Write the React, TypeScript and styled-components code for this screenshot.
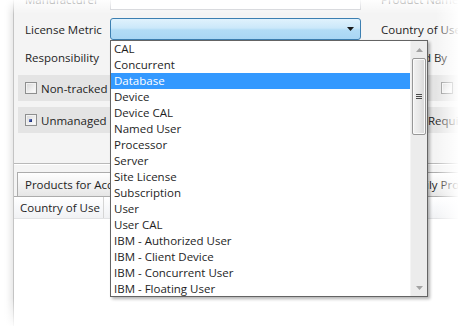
import React from "react";
import styled, { createGlobalStyle } from "styled-components";

const Global = createGlobalStyle`
  html, body { margin: 0; padding: 0; background: #fff; }
  body { font-family: "Open Sans", "Noto Sans", sans-serif; font-size: 11.5px; color: #1e1e1e; }
  * { box-sizing: border-box; }
`;

const Stage = styled.div`
  position: relative;
  width: 458px;
  height: 326px;
  overflow: hidden;
  background: #fff;
  padding-left: 13px;
`;

const Window = styled.div`
  height: 100%;
  background: #f4f4f4;
  border-left: 1px solid #c4c4c4;
  box-shadow: -3px 0 6px rgba(0, 0, 0, 0.1);
  display: flex;
  flex-direction: column;
`;

const Form = styled.div`
  margin-top: -12px;
  padding-left: 4px;
  display: flex;
  flex-direction: column;
`;

const Row = styled.div<{ $top: number; $h: number }>`
  display: grid;
  grid-template-columns: 357px 1fr;
  height: ${(p) => p.$h}px;
  margin-top: ${(p) => p.$top}px;
`;

const FieldCell = styled.div<{ $pad: number }>`
  display: flex;
  align-items: center;
  padding-left: ${(p) => p.$pad}px;
  white-space: nowrap;
`;

const Label = styled.span`
  width: 85px;
  flex: none;
  white-space: nowrap;
`;

const TextBox = styled.div`
  width: 251px;
  height: 22px;
  background: #fff;
  border: 1px solid #c9cbd0;
`;

const Combo = styled.div`
  position: relative;
  width: 251px;
  height: 22px;
  border: 1px solid #3c7fb1;
  border-radius: 3px;
  background: linear-gradient(to bottom, #e0f2fd 0%, #cbe8fa 45%, #b2dcf6 55%, #a8d6f4 100%);
`;

const ComboArrow = styled.svg`
  position: absolute;
  right: 6px;
  top: 8px;
`;

const CheckCell = styled.div<{ $indent: number; $right?: boolean }>`
  display: flex;
  align-items: center;
  background: #e4e4e4;
  margin-right: ${(p) => (p.$right ? 0 : 5)}px;
  padding-left: ${(p) => p.$indent}px;
  white-space: nowrap;
`;

const CheckBox = styled.span`
  position: relative;
  width: 12px;
  height: 12px;
  flex: none;
  margin-right: 4px;
  border: 1px solid #8e8f8f;
  background: linear-gradient(135deg, #d6d6d6 0%, #f4f4f4 70%, #ffffff 100%);
  box-shadow: inset 0 0 0 1px #f2f2f2;
`;

const CheckMark = styled.span`
  position: absolute;
  left: 3px;
  top: 4px;
  width: 3px;
  height: 3px;
  background: linear-gradient(135deg, #8fa3e0 0%, #2a3f8f 60%, #1a2a6e 100%);
`;

const Separator = styled.div`
  margin-top: 30px;
  height: 2px;
  border-top: 1px solid #b9b9b9;
  border-bottom: 1px solid #ffffff;
`;

const TabStrip = styled.div`
  display: flex;
  height: 24px;
  margin-top: 7px;
  padding-left: 3px;
`;

const Tab = styled.div<{ $w: number }>`
  width: ${(p) => p.$w}px;
  flex: none;
  display: flex;
  align-items: center;
  padding-left: 7px;
  border: 1px solid #acacac;
  border-bottom: none;
  background: linear-gradient(to bottom, #ffffff 0%, #f0f0f0 60%, #e6e6e6 100%);
  white-space: nowrap;
  overflow: hidden;
`;

const ListPanel = styled.div`
  flex: 1;
  background: #fff;
  border-top: 1px solid #acacac;
  display: flex;
  flex-direction: column;
`;

const ColumnHeader = styled.div`
  height: 22px;
  display: flex;
  background: linear-gradient(to bottom, #ffffff 0%, #f7f8fa 50%, #f1f2f4 100%);
  border-bottom: 1px solid #e2e3e5;
`;

const HeaderCell = styled.div`
  width: 90px;
  display: flex;
  align-items: center;
  padding-left: 6px;
  border-right: 1px solid #d5d5d5;
  white-space: nowrap;
`;

const Popup = styled.div`
  position: absolute;
  top: calc(100% + 1px);
  left: -1px;
  width: 318px;
  height: 257px;
  background: #fff;
  border: 1px solid #646464;
  box-shadow: 2px 2px 3px rgba(0, 0, 0, 0.3);
  display: flex;
  overflow: hidden;
  z-index: 5;
`;

const ItemList = styled.div`
  flex: 1;
  display: flex;
  flex-direction: column;
`;

const Item = styled.div<{ $sel?: boolean }>`
  height: 16px;
  flex: none;
  line-height: 16px;
  padding-left: 3px;
  white-space: nowrap;
  color: ${(p) => (p.$sel ? "#fff" : "#1e1e1e")};
  background: ${(p) => (p.$sel ? "#3399ff" : "transparent")};
`;

const ScrollBar = styled.div`
  width: 17px;
  flex: none;
  display: flex;
  flex-direction: column;
  align-items: center;
  background: #ececec;
  border-left: 1px solid #f4f4f4;
`;

const ScrollButton = styled.div`
  height: 17px;
  width: 100%;
  flex: none;
  display: flex;
  align-items: center;
  justify-content: center;
`;

const Thumb = styled.div`
  width: 14px;
  height: 77px;
  flex: none;
  border: 1px solid #979797;
  border-radius: 2px;
  background: linear-gradient(to right, #f2f2f2 0%, #e8e8e8 50%, #d8d8d8 100%);
  box-shadow: inset 0 0 0 1px #fafafa;
  display: flex;
  flex-direction: column;
  align-items: center;
  justify-content: center;
  gap: 1px;
`;

const Grip = styled.span`
  width: 6px;
  height: 1px;
  background: #4a4a4a;
`;

const Spacer = styled.div`
  flex: 1;
`;

const FadeTop = styled.div`
  position: absolute;
  left: 0;
  right: 0;
  top: 0;
  height: 14px;
  background: linear-gradient(to bottom, rgba(255, 255, 255, 0.9), rgba(255, 255, 255, 0));
  pointer-events: none;
`;

const FadeRight = styled.div`
  position: absolute;
  top: 0;
  bottom: 0;
  right: 0;
  width: 22px;
  background: linear-gradient(to right, rgba(255, 255, 255, 0), rgba(255, 255, 255, 0.95));
  pointer-events: none;
`;

const FadeBottom = styled.div`
  position: absolute;
  left: 0;
  right: 0;
  bottom: 0;
  height: 28px;
  background: linear-gradient(to bottom, rgba(255, 255, 255, 0), rgba(255, 255, 255, 0.9));
  pointer-events: none;
`;

const metrics = [
  "CAL",
  "Concurrent",
  "Database",
  "Device",
  "Device CAL",
  "Named User",
  "Processor",
  "Server",
  "Site License",
  "Subscription",
  "User",
  "User CAL",
  "IBM - Authorized User",
  "IBM - Client Device",
  "IBM - Concurrent User",
  "IBM - Floating User",
];

const Arrow = ({ up, color }: { up?: boolean; color: string }) => (
  <svg width="7" height="4" viewBox="0 0 7 4">
    <path d={up ? "M0 4 L3.5 0 L7 4 Z" : "M0 0 L7 0 L3.5 4 Z"} fill={color} />
  </svg>
);

export default function App() {
  return (
    <>
      <Global />
      <Stage>
        <Window>
          <Form>
            <Row $top={0} $h={22}>
              <FieldCell $pad={7}>
                <Label>Manufacturer</Label>
                <TextBox />
              </FieldCell>
              <FieldCell $pad={6}>Product Name</FieldCell>
            </Row>
            <Row $top={8} $h={22}>
              <FieldCell $pad={7}>
                <Label>License Metric</Label>
                <Combo>
                  <ComboArrow width="7" height="4" viewBox="0 0 7 4">
                    <path d="M0 0 L7 0 L3.5 4 Z" fill="#1a1a1a" />
                  </ComboArrow>
                  <Popup>
                    <ItemList>
                      {metrics.map((m) => (
                        <Item key={m} $sel={m === "Database"}>
                          {m}
                        </Item>
                      ))}
                    </ItemList>
                    <ScrollBar>
                      <ScrollButton>
                        <Arrow up color="#a3a3a3" />
                      </ScrollButton>
                      <Thumb>
                        <Grip />
                        <Grip />
                        <Grip />
                      </Thumb>
                      <Spacer />
                      <ScrollButton>
                        <Arrow color="#a3a3a3" />
                      </ScrollButton>
                    </ScrollBar>
                  </Popup>
                </Combo>
              </FieldCell>
              <FieldCell $pad={6}>Country of Use</FieldCell>
            </Row>
            <Row $top={6} $h={22}>
              <FieldCell $pad={7}>
                <Label>Responsibility</Label>
              </FieldCell>
              <FieldCell $pad={6}>Managed By</FieldCell>
            </Row>
            <Row $top={7} $h={26}>
              <CheckCell $indent={7}>
                <CheckBox />
                Non-tracked
              </CheckCell>
              <CheckCell $indent={66} $right>
                <CheckBox />
              </CheckCell>
            </Row>
            <Row $top={6} $h={26}>
              <CheckCell $indent={7}>
                <CheckBox>
                  <CheckMark />
                </CheckBox>
                Unmanaged
              </CheckCell>
              <CheckCell $indent={53} $right>
                Requires Approval
              </CheckCell>
            </Row>
          </Form>
          <Separator />
          <TabStrip>
            <Tab $w={378}>Products for Account Licenses</Tab>
            <Tab $w={120}>Family Products</Tab>
          </TabStrip>
          <ListPanel>
            <ColumnHeader>
              <HeaderCell>Country of Use</HeaderCell>
            </ColumnHeader>
          </ListPanel>
        </Window>
        <FadeTop />
        <FadeRight />
        <FadeBottom />
      </Stage>
    </>
  );
}
